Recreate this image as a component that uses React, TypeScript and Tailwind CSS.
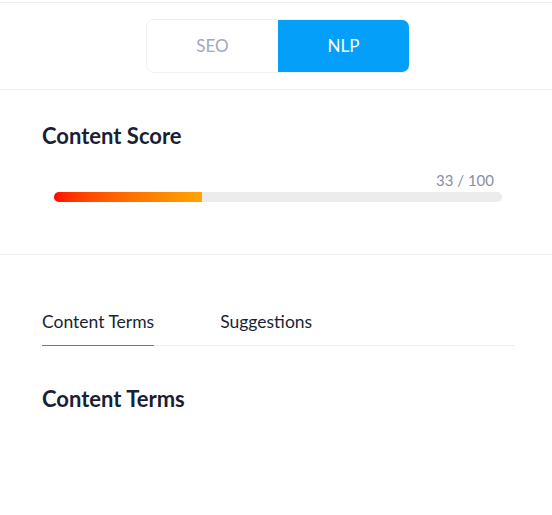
import { useState } from 'react';

const App = () => {
  const [mode, setMode] = useState<'seo' | 'nlp'>('nlp');
  const [tab, setTab] = useState<'terms' | 'suggestions'>('terms');
  const score = 33;

  return (
    <div className="w-[552px] h-[515px] bg-white font-['Lato',sans-serif] text-[#1a1f36]">
      <div className="h-[2px]" />
      {/* mode toggle */}
      <div className="border-t border-[#eeeeee] pt-[16px] pb-[16px] border-b flex justify-center pl-[4px]">
        <div className="flex w-[264px] h-[54px] rounded-[8px] border border-[#eef0f3] overflow-hidden">
          <button
            onClick={() => setMode('seo')}
            className={`flex-1 text-[17px] ${mode === 'seo' ? 'bg-[#039ff9] text-white' : 'bg-white text-[#a3a8bd]'}`}
          >
            SEO
          </button>
          <button
            onClick={() => setMode('nlp')}
            className={`flex-1 text-[17px] ${mode === 'nlp' ? 'bg-[#039ff9] text-white' : 'bg-white text-[#a3a8bd]'}`}
          >
            NLP
          </button>
        </div>
      </div>

      {/* score */}
      <div className="border-b border-[#eeeeee] pl-[42px] pr-[38px] pt-[32px] pb-[52px]">
        <h2 className="text-[22px] font-bold leading-[28px]">Content Score</h2>
        <div className="px-3 mt-[20px]">
          <div className="text-right text-[15px] text-[#8a8fa3] leading-[20px] pr-[8px]">
            {score} / 100
          </div>
          <div className="mt-[2px] h-[10px] rounded-full bg-[#ececec] overflow-hidden">
            <div
              className="h-full bg-gradient-to-r from-[#ff0000] to-[#ffa500]"
              style={{ width: `${score}%` }}
            />
          </div>
        </div>
      </div>

      {/* tabs */}
      <div className="pl-[42px] pr-[37px] pt-[55px]">
        <div className="flex gap-[66px] border-b border-[#eeeeee]">
          <button
            onClick={() => setTab('terms')}
            className={`pb-[11px] text-[17.5px] leading-[24px] -mb-px border-b ${tab === 'terms' ? 'border-[#03a0f8]' : 'border-transparent'}`}
          >
            Content Terms
          </button>
          <button
            onClick={() => setTab('suggestions')}
            className={`pb-[11px] text-[17.5px] leading-[24px] -mb-px border-b ${tab === 'suggestions' ? 'border-[#03a0f8]' : 'border-transparent'}`}
          >
            Suggestions
          </button>
        </div>
        <h2 className="mt-[39px] text-[22px] font-bold leading-[28px]">
          {tab === 'terms' ? 'Content Terms' : 'Suggestions'}
        </h2>
      </div>
    </div>
  );
};

export default App;
